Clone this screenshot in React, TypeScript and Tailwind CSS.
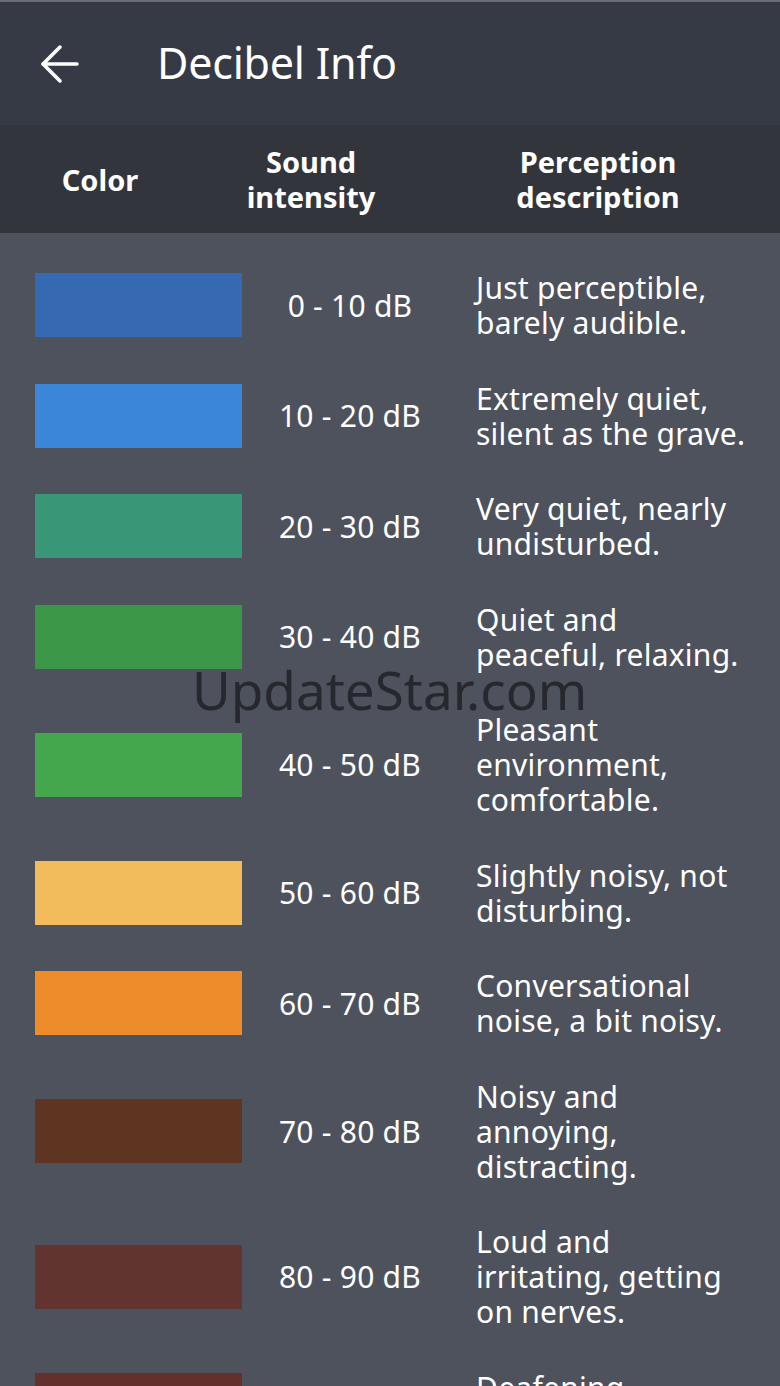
import { ArrowLeft } from 'lucide-react';

const rows = [
  { color: 'bg-[#3569b2]', range: '0 - 10 dB', desc: ['Just perceptible,', 'barely audible.'] },
  { color: 'bg-[#3b86d8]', range: '10 - 20 dB', desc: ['Extremely quiet,', 'silent as the grave.'] },
  { color: 'bg-[#399777]', range: '20 - 30 dB', desc: ['Very quiet, nearly', 'undisturbed.'] },
  { color: 'bg-[#3b9647]', range: '30 - 40 dB', desc: ['Quiet and', 'peaceful, relaxing.'] },
  { color: 'bg-[#45a74d]', range: '40 - 50 dB', desc: ['Pleasant', 'environment,', 'comfortable.'] },
  { color: 'bg-[#f2bb5b]', range: '50 - 60 dB', desc: ['Slightly noisy, not', 'disturbing.'] },
  { color: 'bg-[#ee8c2b]', range: '60 - 70 dB', desc: ['Conversational', 'noise, a bit noisy.'] },
  { color: 'bg-[#5e3521]', range: '70 - 80 dB', desc: ['Noisy and', 'annoying,', 'distracting.'] },
  { color: 'bg-[#62342f]', range: '80 - 90 dB', desc: ['Loud and', 'irritating, getting', 'on nerves.'] },
  { color: 'bg-[#64302c]', range: '90 - 100 dB', desc: ['Deafening,', 'harmful to hearing.'] },
];

export default function App() {
  return (
    <div className="relative w-[780px] h-[1386px] overflow-hidden bg-[#4e525d] font-['Noto_Sans','Open_Sans',sans-serif] text-white">
      <div className="h-[2px] bg-[#6a6c72]" />

      {/* app bar */}
      <div className="h-[123px] bg-[#363a45] flex items-center">
        <div className="w-[157px] pl-[31px]">
          <ArrowLeft size={58} strokeWidth={1.5} />
        </div>
        <h1 className="text-[43px] leading-none pb-[2px] tracking-[-0.2px]">Decibel Info</h1>
      </div>

      {/* table header */}
      <div className="h-[108px] bg-[#33353c] flex items-center text-[29px] font-bold leading-[35px] text-center">
        <div className="w-[200px]">Color</div>
        <div className="w-[222px]">Sound<br />intensity</div>
        <div className="w-[352px]">Perception<br />description</div>
      </div>

      {/* rows */}
      <div className="pt-[17px] flex flex-col">
        {rows.map((row, i) => (
          <div key={i} className="flex items-center py-[20.25px]">
            <div className="w-[276px] pl-[35px] shrink-0">
              <div className={`w-[207px] h-[64px] ${row.color}`} />
            </div>
            <div className="w-[148px] text-center text-[30px] leading-[35px] tracking-[0.25px] whitespace-nowrap shrink-0">
              {row.range}
            </div>
            <div className="pl-[52px] text-[30px] leading-[35px] tracking-[0.25px]">
              {row.desc.map((line, j) => (
                <div key={j} className="whitespace-nowrap">{line}</div>
              ))}
            </div>
          </div>
        ))}
      </div>

      {/* watermark */}
      <div className="absolute left-[192px] top-[663px] text-[53px] leading-none text-[#26282d] pointer-events-none">
        UpdateStar.com
      </div>
    </div>
  );
}
